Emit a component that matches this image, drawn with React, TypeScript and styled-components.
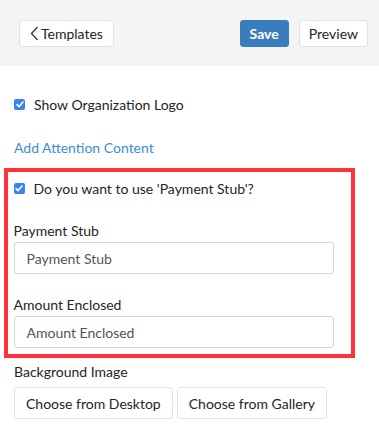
import React from 'react'
import styled, { createGlobalStyle } from 'styled-components'

const GlobalStyle = createGlobalStyle`
  html, body {
    margin: 0;
    padding: 0;
    background: #ffffff;
    font-family: Lato, 'Open Sans', sans-serif;
    color: #212529;
    line-height: 17px;
  }
`

const Page = styled.div`
  width: 379px;
  height: 435px;
  overflow: hidden;
  background: #ffffff;
`

const Toolbar = styled.div`
  height: 66px;
  box-sizing: border-box;
  background: #f4f4f4;
  display: flex;
  align-items: flex-start;
  padding: 20px 11px 0 19px;
`

const Spacer = styled.div`
  flex: 1;
`

const ToolButton = styled.button<{ $primary?: boolean }>`
  height: 27px;
  box-sizing: border-box;
  display: flex;
  align-items: center;
  gap: 2px;
  padding: 0 9px;
  border-radius: 3px;
  font-family: inherit;
  font-size: 14px;
  line-height: 17px;
  font-weight: ${(p) => (p.$primary ? 700 : 400)};
  color: ${(p) => (p.$primary ? '#ffffff' : '#212529')};
  background: ${(p) => (p.$primary ? '#3a7dbc' : '#ffffff')};
  border: 1px solid ${(p) => (p.$primary ? '#3a7dbc' : '#e2e2e2')};
  margin-left: ${(p) => (p.$primary ? 0 : 10)}px;

  &:first-child {
    margin-left: 0;
    padding-left: 10px;
    padding-right: 10px;
  }
`

const Body = styled.div`
  padding-top: 30px;
  display: flex;
  flex-direction: column;
`

const CheckRow = styled.label<{ $inset?: boolean }>`
  display: flex;
  align-items: center;
  gap: 9px;
  font-size: 14px;
  line-height: 17px;
  color: #212529;
  padding-left: ${(p) => (p.$inset ? 0 : 14)}px;
`

const Box = styled.span`
  width: 11px;
  height: 11px;
  border-radius: 2px;
  background: #3b82f6;
  display: flex;
  align-items: center;
  justify-content: center;
`

const LinkText = styled.div`
  color: #408dd0;
  font-size: 14px;
  padding-left: 14px;
  margin-top: 26px;
`

const Highlight = styled.div`
  margin: 12px 0 0 4px;
  width: 351px;
  box-sizing: border-box;
  border: 4.5px solid #ff323b;
  padding: 8px 0 6px 5.5px;
  display: flex;
  flex-direction: column;
`

const Field = styled.div<{ $gap: number }>`
  display: flex;
  flex-direction: column;
  margin-top: ${(p) => p.$gap}px;
`

const FieldLabel = styled.div<{ $outer?: boolean; $below: number }>`
  font-size: 14px;
  color: #212529;
  margin-bottom: ${(p) => p.$below}px;
  padding-left: ${(p) => (p.$outer ? 14 : 0)}px;
`

const TextBox = styled.div`
  width: 320px;
  height: 32px;
  box-sizing: border-box;
  border: 1px solid #d5d5d5;
  border-radius: 3px;
  display: flex;
  align-items: center;
  padding-left: 12px;
  font-size: 14px;
  color: #555555;
`

const Actions = styled.div`
  display: flex;
  gap: 4px;
  padding-left: 14px;
`

const OutlineButton = styled.button`
  height: 32px;
  box-sizing: border-box;
  padding: 0 11px;
  background: #ffffff;
  border: 1px solid #e2e2e2;
  border-radius: 3px;
  font-family: inherit;
  font-size: 14px;
  color: #212529;
`

const Check = () => (
  <Box>
    <svg width='8' height='7' viewBox='0 0 8 7'>
      <path d='M1 3.6 L3.1 5.6 L7 1' fill='none' stroke='#fff' strokeWidth='1.6' strokeLinecap='round' strokeLinejoin='round' />
    </svg>
  </Box>
)

export default function App() {
  return (
    <Page>
      <GlobalStyle />
      <Toolbar>
        <ToolButton>
          <svg width='9' height='15' viewBox='0 0 9 15'>
            <path d='M7.5 1 L1.5 7.5 L7.5 14' fill='none' stroke='#333' strokeWidth='1.3' />
          </svg>
          Templates
        </ToolButton>
        <Spacer />
        <ToolButton $primary>Save</ToolButton>
        <ToolButton>Preview</ToolButton>
      </Toolbar>
      <Body>
        <CheckRow>
          <Check />
          Show Organization Logo
        </CheckRow>
        <LinkText>Add Attention Content</LinkText>
        <Highlight>
          <CheckRow $inset>
            <Check />
            Do you want to use 'Payment Stub'?
          </CheckRow>
          <Field $gap={25}>
            <FieldLabel $below={3}>Payment Stub</FieldLabel>
            <TextBox>Payment Stub</TextBox>
          </Field>
          <Field $gap={22}>
            <FieldLabel $below={3}>Amount Enclosed</FieldLabel>
            <TextBox>Amount Enclosed</TextBox>
          </Field>
        </Highlight>
        <Field $gap={5}>
          <FieldLabel $outer $below={7}>Background Image</FieldLabel>
          <Actions>
            <OutlineButton>Choose from Desktop</OutlineButton>
            <OutlineButton>Choose from Gallery</OutlineButton>
          </Actions>
        </Field>
      </Body>
    </Page>
  )
}
